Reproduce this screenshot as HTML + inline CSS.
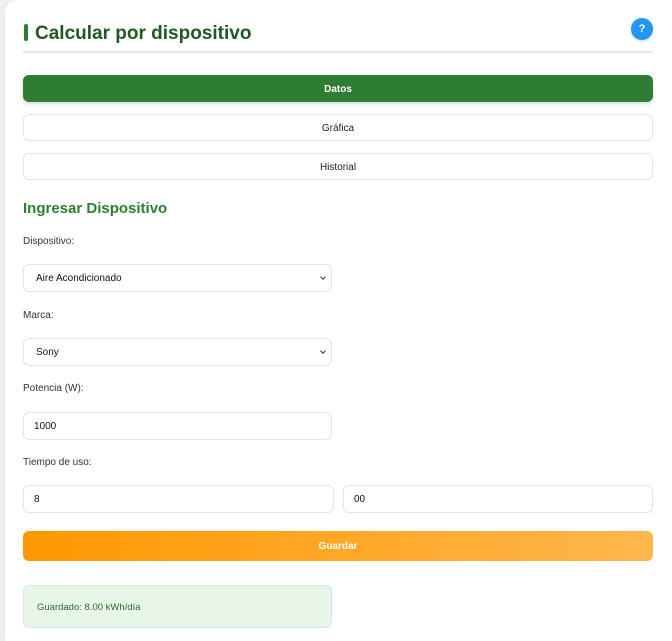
<!DOCTYPE html>
<html><head><meta charset="utf-8"><style>
*{box-sizing:border-box;margin:0;padding:0}
html,body{width:672px;height:641px;overflow:hidden}
body{background:#eef2ef;font-family:"Liberation Sans",Arial,sans-serif;position:relative}
.card{position:absolute;left:5px;top:0;width:667px;height:641px;background:#fff;border-radius:12px 0 0 0;box-shadow:0 0 6px rgba(0,0,0,.06)}
.abs{position:absolute}
h1{position:absolute;left:35px;top:23px;font-size:19px;font-weight:bold;color:#1e5a22}
.bar{left:24px;top:24px;width:4px;height:17px;background:#2e7d32;border-radius:2px}
.hr{left:23px;top:51px;width:630px;height:2px;background:#e6e8e6}
.help{left:631px;top:18px;width:22px;height:22px;border-radius:50%;background:#2196f3;color:#fff;font-size:11px;font-weight:bold;text-align:center;line-height:22px;box-shadow:0 1px 3px rgba(0,0,0,.2)}
.tab{left:23px;width:630px;height:27px;border:1px solid #e3e6e3;border-radius:6px;font-size:10px;text-align:center;line-height:27px;color:#222;background:#fff}
.tab.on{background:#2e7d32;color:#fff;font-weight:bold;border-color:#2e7d32;box-shadow:0 2px 4px rgba(0,0,0,.15)}
h2{position:absolute;left:23px;top:200px;font-size:15px;font-weight:bold;color:#2e7d32}
.lbl{left:23px;font-size:10px;color:#333}
.in{height:28px;border:1px solid #e3e6e3;border-radius:6px;font-size:10px;color:#111;padding-left:12px;line-height:28px;background:#fff}
.chev{position:absolute;top:10px;width:4px;height:4px;border-right:1.5px solid #333;border-bottom:1.5px solid #333;transform:rotate(45deg)}
.btn{left:23px;top:531px;width:630px;height:30px;border-radius:6px;background:linear-gradient(90deg,#ff9800,#ffb74d);color:#fff;font-size:10px;font-weight:bold;text-align:center;line-height:31px}
.res{left:23px;top:585px;width:309px;height:43px;border:1px solid #d6ead8;border-radius:6px;background:#e8f5e9;color:#2e6b31;font-size:9.5px;padding-left:13px;line-height:43px}
</style></head><body>
<div class="card"></div>
<div class="abs bar"></div>
<h1>Calcular por dispositivo</h1>
<div class="abs help">?</div>
<div class="abs hr"></div>
<div class="abs tab on" style="top:75px">Datos</div>
<div class="abs tab" style="top:114px">Gráfica</div>
<div class="abs tab" style="top:153px">Historial</div>
<h2>Ingresar Dispositivo</h2>
<div class="abs lbl" style="top:236px">Dispositivo:</div>
<div class="abs in" style="left:23px;top:264px;width:309px">Aire Acondicionado<span class="chev" style="right:6px"></span></div>
<div class="abs lbl" style="top:310px">Marca:</div>
<div class="abs in" style="left:23px;top:338px;width:309px">Sony<span class="chev" style="right:6px"></span></div>
<div class="abs lbl" style="top:383px">Potencia (W):</div>
<div class="abs in" style="left:23px;top:412px;width:309px;padding-left:10px">1000</div>
<div class="abs lbl" style="top:457px">Tiempo de uso:</div>
<div class="abs in" style="left:23px;top:485px;width:311px;padding-left:10px">8</div>
<div class="abs in" style="left:343px;top:485px;width:310px;padding-left:10px">00</div>
<div class="abs btn">Guardar</div>
<div class="abs res">Guardado: 8.00 kWh/día</div>
</body></html>
